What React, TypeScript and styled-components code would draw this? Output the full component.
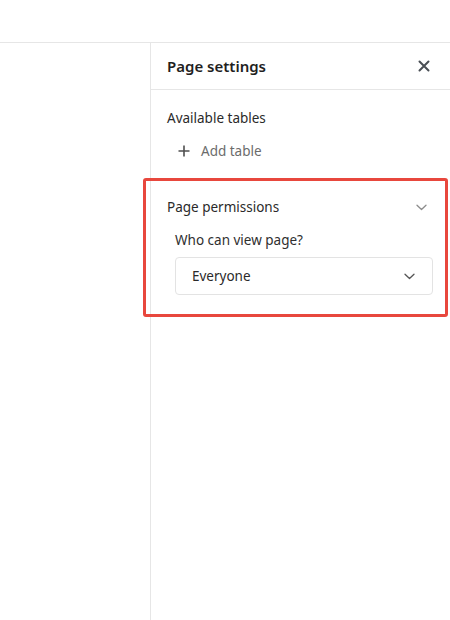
import styled, { createGlobalStyle } from "styled-components";

const GlobalStyle = createGlobalStyle`
  html, body {
    margin: 0;
    padding: 0;
    background: #fff;
  }

  body {
    font-family: "Noto Sans", "Open Sans", Arial, sans-serif;
    color: #252525;
  }
`;

const Screen = styled.div`
  width: 450px;
  height: 620px;
  display: flex;
  flex-direction: column;
  overflow: hidden;
`;

const TopBar = styled.header`
  height: 42px;
  flex-shrink: 0;
  border-bottom: 1px solid #e6e6e6;
`;

const Body = styled.div`
  flex: 1;
  display: flex;
`;

const Canvas = styled.main`
  width: 150px;
  flex-shrink: 0;
  border-right: 1px solid #e6e6e6;
`;

const Panel = styled.aside`
  flex: 1;
  display: flex;
  flex-direction: column;
`;

const PanelHeader = styled.div`
  height: 46px;
  display: flex;
  align-items: center;
  justify-content: space-between;
  padding: 0 20px 0 16px;
  border-bottom: 1px solid #e6e6e6;
`;

const PanelTitle = styled.h2`
  margin: 0;
  font-size: 15px;
  font-weight: 600;
  color: #1f1f1f;
`;

const IconButton = styled.button`
  display: flex;
  align-items: center;
  justify-content: center;
  padding: 0;
  border: none;
  background: none;
  color: #4a4f55;
  cursor: pointer;
`;

const Section = styled.section<{ $spaced?: boolean }>`
  position: relative;
  padding: ${(p) => (p.$spaced ? "0" : "16px")} 17px 0 16px;
  margin-top: ${(p) => (p.$spaced ? "35px" : "0")};
`;

const SectionTitle = styled.div`
  font-size: 13.5px;
  color: #2a2a2a;
  line-height: 24px;
`;

const AddButton = styled.button`
  display: flex;
  align-items: center;
  gap: 11px;
  margin: 12px 0 0 11px;
  padding: 0;
  border: none;
  background: none;
  font: inherit;
  font-size: 13.5px;
  color: #6b6b6b;
  cursor: pointer;
`;

const CollapseHeader = styled.div`
  display: flex;
  align-items: center;
  justify-content: space-between;
  padding-right: 6px;
`;

const Field = styled.div`
  display: flex;
  flex-direction: column;
  gap: 7px;
  padding: 11px 0 0 8px;
`;

const FieldLabel = styled.label`
  font-size: 13.5px;
  line-height: 20px;
  color: #2f2f2f;
`;

const Select = styled.div`
  height: 38px;
  box-sizing: border-box;
  display: flex;
  align-items: center;
  justify-content: space-between;
  padding: 0 17px 0 16px;
  border: 1px solid #e3e3e3;
  border-radius: 4px;
  font-size: 13.5px;
  color: #2a2a2a;
`;

const Highlight = styled.div`
  position: absolute;
  top: -17px;
  left: -8px;
  right: 2px;
  bottom: -22px;
  border: 3px solid #e8473d;
  border-radius: 3px;
  pointer-events: none;
`;

function CloseIcon() {
  return (
    <svg width="12" height="12" viewBox="0 0 12 12" fill="none">
      <path d="M1.5 1.5l9 9M10.5 1.5l-9 9" stroke="currentColor" strokeWidth="2" strokeLinecap="round" />
    </svg>
  );
}

function PlusIcon() {
  return (
    <svg width="12" height="12" viewBox="0 0 12 12" fill="none">
      <path d="M6 0.5v11M0.5 6h11" stroke="#4f4f4f" strokeWidth="1.6" />
    </svg>
  );
}

function Chevron({ color }: { color: string }) {
  return (
    <svg width="11" height="7" viewBox="0 0 11 7" fill="none">
      <path d="M1 1.2l4.5 4.3L10 1.2" stroke={color} strokeWidth="1.3" strokeLinecap="round" strokeLinejoin="round" />
    </svg>
  );
}

export default function App() {
  return (
    <>
      <GlobalStyle />
      <Screen>
        <TopBar />
        <Body>
          <Canvas />
          <Panel>
            <PanelHeader>
              <PanelTitle>Page settings</PanelTitle>
              <IconButton aria-label="Close">
                <CloseIcon />
              </IconButton>
            </PanelHeader>

            <Section>
              <SectionTitle>Available tables</SectionTitle>
              <AddButton>
                <PlusIcon />
                Add table
              </AddButton>
            </Section>

            <Section $spaced>
              <CollapseHeader>
                <SectionTitle>Page permissions</SectionTitle>
                <Chevron color="#8c8c8c" />
              </CollapseHeader>
              <Field>
                <FieldLabel>Who can view page?</FieldLabel>
                <Select>
                  Everyone
                  <Chevron color="#555" />
                </Select>
              </Field>
              <Highlight />
            </Section>
          </Panel>
        </Body>
      </Screen>
    </>
  );
}
